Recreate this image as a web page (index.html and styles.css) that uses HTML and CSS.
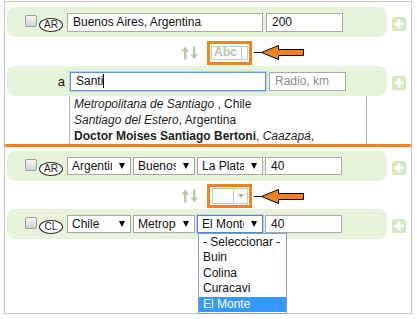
FILE: index.html
```html
<!DOCTYPE html>
<html lang="es">
<head>
        <meta charset="UTF-8" />
        <title>Lugares</title>
        <link rel="stylesheet" href="styles.css">
</head>
<body>

<div class="panel">
        <div class="line">
                <div class="row">
                        <input type="checkbox" class="check">
                        <span class="badge">AR</span>
                        <input class="field wide" value="Buenos Aires, Argentina">
                        <input class="field short" value="200">
                </div>
                <span class="add"><svg width="14" height="14" viewBox="0 0 14 14"><rect width="14" height="14" rx="2.5" fill="#d5e8c2"/><path d="M5.5 2.5h3v3h3v3h-3v3h-3v-3h-3v-3h3z" fill="#fff"/></svg></span>
        </div>

        <div class="swap">
                <svg class="updown" width="17" height="14" viewBox="0 0 17 14"><path d="M0.5 5.5L4.25 0.5L8 5.5H5.4V13.5H3.1V5.5Z M12.1 0.5H14.4V8.5H17L13.25 13.5L9.5 8.5H12.1Z" fill="#b8c7a7"/></svg>
                <div class="picker">
                        <div class="picker-in">
                                <span class="abc">Abc</span>
                                <span class="abc-rest"></span>
                        </div>
                </div>
                <svg class="pointer" width="50" height="15" viewBox="0 0 50 15"><line x1="0" y1="7.5" x2="8" y2="7.5" stroke="#000"/><polygon points="7.5,7.5 24.5,0.5 24.5,4.5 49.5,4.5 49.5,10.5 24.5,10.5 24.5,14.5" fill="#f58220" stroke="#000"/></svg>
        </div>

        <div class="line">
                <div class="row">
                        <label class="lbl">a</label>
                        <div class="field wide focus">Santi<span class="caret"></span></div>
                        <input class="field short" placeholder="Radio, km">
                </div>
                <span class="add"><svg width="14" height="14" viewBox="0 0 14 14"><rect width="14" height="14" rx="2.5" fill="#d5e8c2"/><path d="M5.5 2.5h3v3h3v3h-3v3h-3v-3h-3v-3h3z" fill="#fff"/></svg></span>
        </div>

        <ul class="suggest">
                <li><i>Metropolitana de Santiago</i> , Chile</li>
                <li><i>Santiago del Estero</i>, Argentina</li>
                <li><b>Doctor Moises Santiago Bertoni</b>, <i>Caazapá</i>,</li>
        </ul>

        <div class="divider"></div>

        <div class="line">
                <div class="row">
                        <input type="checkbox" class="check">
                        <span class="badge">AR</span>
                        <div class="sel s1"><span class="sel-val">Argentina</span><span class="sel-arr"></span></div>
                        <div class="sel s2"><span class="sel-val">Buenos Aires</span><span class="sel-arr"></span></div>
                        <div class="sel s3"><span class="sel-val">La Plata</span><span class="sel-arr"></span></div>
                        <input class="field short num" value="40">
                </div>
                <span class="add"><svg width="14" height="14" viewBox="0 0 14 14"><rect width="14" height="14" rx="2.5" fill="#d5e8c2"/><path d="M5.5 2.5h3v3h3v3h-3v3h-3v-3h-3v-3h3z" fill="#fff"/></svg></span>
        </div>

        <div class="swap tight">
                <svg class="updown" width="17" height="14" viewBox="0 0 17 14"><path d="M0.5 5.5L4.25 0.5L8 5.5H5.4V13.5H3.1V5.5Z M12.1 0.5H14.4V8.5H17L13.25 13.5L9.5 8.5H12.1Z" fill="#b8c7a7"/></svg>
                <div class="picker list-kind">
                        <div class="picker-in">
                                <span class="mini-val"></span>
                                <span class="mini-arr"><span></span></span>
                        </div>
                </div>
                <svg class="pointer" width="50" height="15" viewBox="0 0 50 15"><line x1="0" y1="7.5" x2="8" y2="7.5" stroke="#000"/><polygon points="7.5,7.5 24.5,0.5 24.5,4.5 49.5,4.5 49.5,10.5 24.5,10.5 24.5,14.5" fill="#f58220" stroke="#000"/></svg>
        </div>

        <div class="line">
                <div class="row">
                        <input type="checkbox" class="check">
                        <span class="badge">CL</span>
                        <div class="sel s1"><span class="sel-val">Chile</span><span class="sel-arr"></span></div>
                        <div class="sel s2"><span class="sel-val">Metropolitana</span><span class="sel-arr"></span></div>
                        <div class="sel s3 open"><span class="sel-val">El Monte</span><span class="sel-arr"></span>
                                <ul class="pop">
                                        <li>- Seleccionar -</li>
                                        <li>Buin</li>
                                        <li>Colina</li>
                                        <li>Curacavi</li>
                                        <li class="on">El Monte</li>
                                </ul>
                        </div>
                        <input class="field short num" value="40">
                </div>
                <span class="add"><svg width="14" height="14" viewBox="0 0 14 14"><rect width="14" height="14" rx="2.5" fill="#d5e8c2"/><path d="M5.5 2.5h3v3h3v3h-3v3h-3v-3h-3v-3h3z" fill="#fff"/></svg></span>
        </div>
</div>

</body>
</html>
```
FILE: styles.css
```css
body {
        margin: 0;
        font-family: "Liberation Sans", Arial, sans-serif;
        font-size: 12px;
        color: #111;
        background: #fff;
}

.panel {
        box-sizing: border-box;
        width: 408px;
        height: 313px;
        margin: 1px 0 0 4px;
        border: 1px solid #c3c3c3;
        padding: 5px 0 0 0;
}

.line {
        display: flex;
        align-items: center;
        margin-left: 2px;
}

.row {
        box-sizing: border-box;
        width: 380px;
        height: 30px;
        background: #e6f2da;
        border-radius: 8px;
        display: flex;
        align-items: center;
        padding-left: 18px;
}

.add {
        display: flex;
        margin: 3px 0 0 5px;
}

.check {
        appearance: none;
        box-sizing: border-box;
        width: 12px;
        height: 12px;
        margin: -2px 0 0 0;
        border: 1px solid #9d9d9d;
        border-radius: 2px;
        background: linear-gradient(#f4f4f4, #d2d2d2);
}

.badge {
        box-sizing: border-box;
        width: 24px;
        height: 14px;
        margin: 6px 0 0 2px;
        border: 1px solid #2a2a2a;
        border-radius: 50%;
        background: #fff;
        font-size: 10px;
        line-height: 12px;
        text-align: center;
        color: #222;
}

.field {
        box-sizing: border-box;
        height: 19px;
        margin: 0;
        padding: 0 5px;
        border: 1px solid #a9a9a9;
        background: #fff;
        font: inherit;
        color: #111;
        line-height: 17px;
        outline: none;
}

.field::placeholder {
        color: #8c8c8c;
}

.wide {
        width: 196px;
        margin-left: 4px;
}

.short {
        width: 77px;
        margin-left: 3px;
}

.num {
        height: 18px;
        margin-left: 2px;
}

.lbl {
        width: 40px;
        text-align: right;
        font-size: 13px;
}

.lbl + .wide {
        margin-left: 5px;
}

.focus {
        border-color: #5d98dc;
        box-shadow: 0 0 0 1px #b4d0f1;
        white-space: nowrap;
}

.caret {
        display: inline-block;
        width: 1px;
        height: 14px;
        background: #000;
        vertical-align: -3px;
}

.swap {
        box-sizing: border-box;
        display: flex;
        align-items: center;
        height: 29px;
        padding: 2px 0 0 176px;
}

.swap.tight {
        height: 28px;
}

.picker {
        box-sizing: border-box;
        width: 45px;
        height: 24px;
        margin-left: 9px;
        padding: 2px 1px;
        border: 3px solid #f58220;
        background: #fff;
}

.picker-in {
        box-sizing: border-box;
        display: flex;
        height: 100%;
        border: 1px solid #c3ccb5;
}

.abc {
        width: 27px;
        padding-left: 2px;
        border-right: 1px solid #c3ccb5;
        font-weight: bold;
        font-size: 12px;
        line-height: 11px;
        color: #b7c2a8;
}

.abc-rest {
        flex: 1;
}

.list-kind {
        padding: 1px 1px 1px 2px;
}

.mini-val {
        width: 20px;
        border-right: 1px solid #c3ccb5;
}

.mini-arr {
        flex: 1;
        display: flex;
        align-items: center;
        justify-content: center;
}

.mini-arr span {
        border-left: 3px solid transparent;
        border-right: 3px solid transparent;
        border-top: 4px solid #a9b59b;
}

.pointer {
        margin-left: 2px;
}

.suggest {
        box-sizing: border-box;
        list-style: none;
        width: 298px;
        height: 48px;
        margin: 0 0 0 64px;
        padding: 0 0 0 4px;
        border-left: 1px solid #b3b3b3;
        border-right: 1px solid #b3b3b3;
        overflow: hidden;
        line-height: 16px;
        color: #1e1e1e;
        white-space: nowrap;
}

.divider {
        height: 3px;
        margin-bottom: 4px;
        background: #f58220;
}

.sel {
        position: relative;
        box-sizing: border-box;
        display: flex;
        align-items: center;
        height: 18px;
        margin-left: 2px;
        padding: 0 5px 0 4px;
        border: 1px solid #a6a6a6;
        background: #fff;
}

.sel.s1 {
        width: 64px;
        margin-left: 4px;
}

.sel.s2 {
        width: 62px;
}

.sel.s3 {
        width: 66px;
}

.sel-val {
        flex: 1;
        overflow: hidden;
        white-space: nowrap;
        margin-right: 7px;
        line-height: 16px;
}

.sel-arr {
        flex: none;
        border-left: 3.5px solid transparent;
        border-right: 3.5px solid transparent;
        border-top: 6px solid #000;
}

.sel.open {
        border-color: #4f8ad8;
        box-shadow: 0 0 0 1px #b4d0f1;
}

.pop {
        position: absolute;
        top: 100%;
        left: 0;
        z-index: 2;
        box-sizing: border-box;
        width: 89px;
        margin: 1px 0 0 0;
        padding: 1px 0;
        list-style: none;
        border: 1px solid #7f9dc9;
        background: #fff;
        line-height: 15.4px;
}

.pop li {
        padding-left: 4px;
        white-space: nowrap;
}

.pop .on {
        background: #3399ff;
        color: #fff;
}
```
